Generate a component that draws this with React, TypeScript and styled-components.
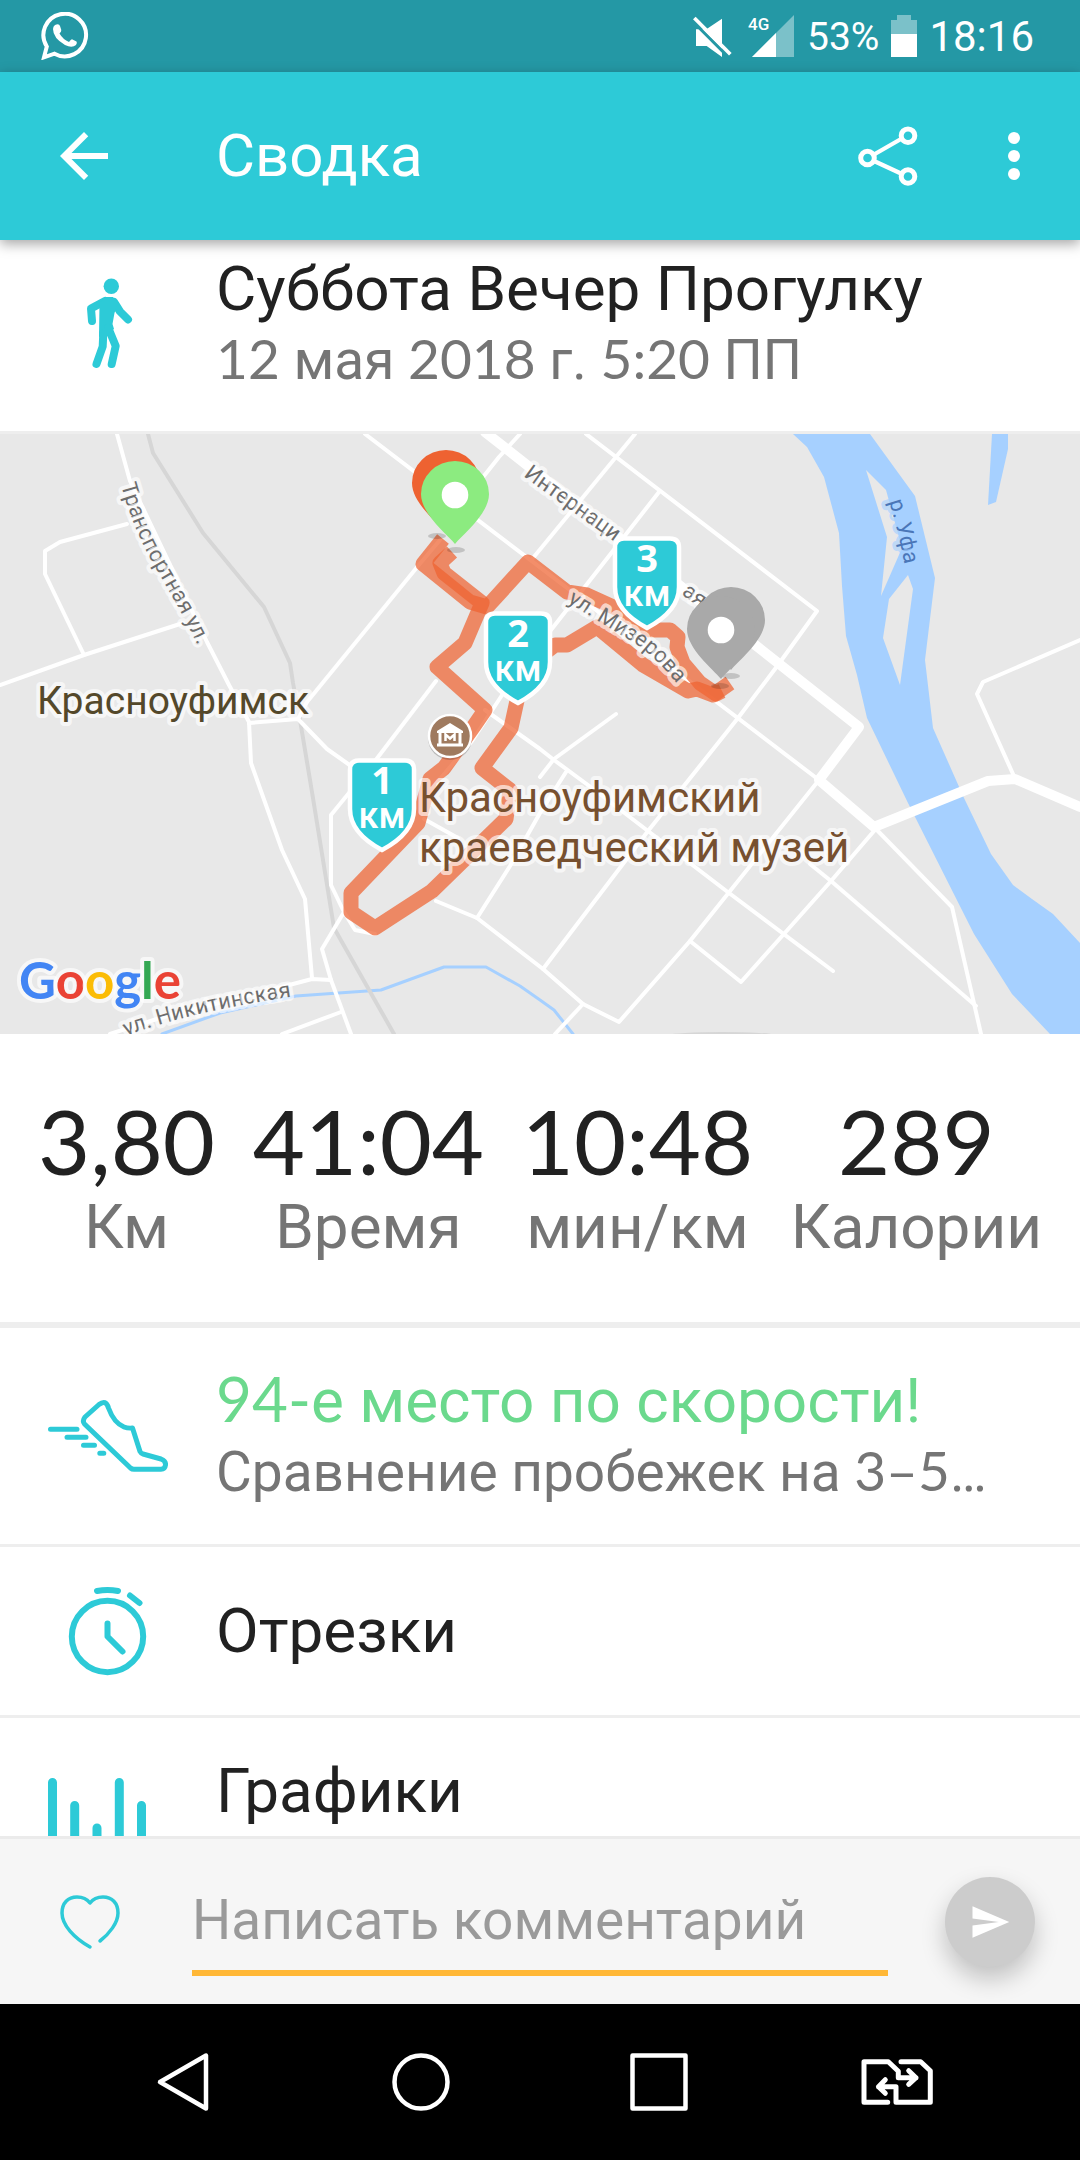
import React, { Fragment, ReactNode } from "react";
import styled, { createGlobalStyle } from "styled-components";

const color = {
  status: "#2498a5",
  brand: "#2dcad7",
  text: "#212121",
  muted: "#757575",
  divider: "#eeeeee",
  success: "#6bd98d",
  bar: "#f6f6f6",
  accent: "#ffb736",
  disabled: "#cccccc",
  route: "#ee6231",
  pinStart: "#8ceb80",
  pinEnd: "#a9a9a9",
  land: "#e8e8e8",
  water: "#a6d0ff",
  street: "#6d6d6d",
  town: "#54482a",
  museum: "#77502f",
};

const GlobalStyle = createGlobalStyle`
  *, *::before, *::after { box-sizing: border-box; }
  body {
    margin: 0;
    background: #ffffff;
    color: ${color.text};
    font-family: Roboto, "Noto Sans", sans-serif;
  }
  button {
    border: 0;
    padding: 0;
    background: none;
    color: inherit;
    font: inherit;
    cursor: pointer;
  }
  svg { display: block; }
`;

/* ---------- layout ---------- */

const Screen = styled.div`
  display: flex;
  flex-direction: column;
  height: 100vh;
`;

const StatusBar = styled.div`
  flex: none;
  display: flex;
  align-items: center;
  gap: 12px;
  height: 72px;
  padding: 0 46px 0 41px;
  background: ${color.status};
  color: #ffffff;
`;

const Spacer = styled.span`
  flex: 1;
`;

const StatusText = styled.span<{ $size: number }>`
  font-size: ${(p) => p.$size}px;
  line-height: 72px;
  padding-top: 2px;
`;

const AppBar = styled.header`
  flex: none;
  position: relative;
  z-index: 1;
  display: flex;
  align-items: center;
  height: 168px;
  padding: 0 30px 0 48px;
  background: ${color.brand};
  color: #ffffff;
  box-shadow: 0 4px 12px rgba(0, 0, 0, 0.35);
`;

const BarTitle = styled.h1`
  flex: 1;
  margin: 0;
  padding-left: 96px;
  font-size: 60px;
  font-weight: 400;
  line-height: 72px;
`;

const BarActions = styled.div`
  display: flex;
  gap: 54px;
`;

const Content = styled.main`
  flex: 1;
  min-height: 0;
  overflow-y: auto;
  scrollbar-width: none;
`;

const rowLayout = `
  display: grid;
  grid-template-columns: 120px minmax(0, 1fr);
  column-gap: 48px;
  align-items: center;
  width: 100%;
  text-align: left;
`;

const Summary = styled.section`
  ${rowLayout}
  padding: 14px 48px 35px;
  border-bottom: 3px solid ${color.divider};
`;

const RowButton = styled.button<{ $tall?: boolean }>`
  ${rowLayout}
  padding: ${(p) => (p.$tall ? "38px 48px 36px" : "24px 48px")};
  border-bottom: 3px solid ${color.divider};
`;

const RowText = styled.span<{ $top?: boolean }>`
  display: block;
  align-self: ${(p) => (p.$top ? "start" : "center")};
`;

const Title = styled.span<{ $success?: boolean }>`
  display: block;
  color: ${(p) => (p.$success ? color.success : color.text)};
  font-size: 62px;
  line-height: 70px;
  white-space: nowrap;
`;

const Subtitle = styled.span`
  display: block;
  overflow: hidden;
  color: ${color.muted};
  font-size: 55px;
  line-height: 72px;
  text-overflow: ellipsis;
  white-space: nowrap;
`;

const Digits = styled.span`
  font-family: Lato, Roboto, sans-serif;
  line-height: 1;
`;

const Stats = styled.dl`
  display: flex;
  justify-content: space-between;
  margin: 0;
  padding: 58px 38px 56px;
  border-bottom: 6px solid ${color.divider};
`;

const Stat = styled.div`
  display: flex;
  flex-direction: column-reverse;
  align-items: center;
`;

const StatLabel = styled.dt`
  color: ${color.muted};
  font-size: 62px;
  line-height: 78px;
`;

const StatValue = styled.dd`
  margin: 0;
  font-family: Lato, Roboto, sans-serif;
  font-size: 90px;
  line-height: 96px;
`;

const CommentBar = styled.form`
  flex: none;
  display: flex;
  align-items: center;
  height: 168px;
  padding: 0 45px 0 60px;
  border-top: 3px solid #ebebeb;
  background: ${color.bar};
`;

const CommentInput = styled.input`
  flex: 1;
  min-width: 0;
  align-self: flex-end;
  height: 107px;
  margin: 0 57px 28px 72px;
  padding: 0;
  border: 0;
  border-bottom: 6px solid ${color.accent};
  border-radius: 0;
  outline: none;
  background: none;
  color: ${color.text};
  font-family: Roboto, "Noto Sans", sans-serif;
  font-size: 55px;
  &::placeholder {
    color: #9a9a9a;
    opacity: 1;
  }
`;

const SendButton = styled.button`
  display: grid;
  place-items: center;
  width: 90px;
  height: 90px;
  border-radius: 50%;
  background: ${color.disabled};
  box-shadow: 0 12px 24px rgba(0, 0, 0, 0.22);
`;

const NavBar = styled.nav`
  flex: none;
  display: flex;
  height: 156px;
  padding: 0 64px;
  background: #000000;
  color: #ffffff;
`;

const NavButton = styled.button`
  flex: 1;
  display: grid;
  place-items: center;
`;

/* ---------- map ---------- */

const MapFigure = styled.figure`
  margin: 0;
  background: ${color.land};
  svg { width: 100%; height: auto; }
`;

const Road = styled.path<{ $width?: number }>`
  fill: none;
  stroke: #ffffff;
  stroke-width: ${(p) => p.$width ?? 4};
  stroke-linejoin: round;
  stroke-linecap: round;
`;

const Rail = styled(Road)`
  stroke: #d6d6d6;
`;

const Stream = styled(Road)`
  stroke: ${color.water};
`;

const Route = styled.path`
  fill: none;
  stroke: ${color.route};
  stroke-opacity: 0.72;
  stroke-width: 15;
  stroke-linejoin: round;
`;

const MapLabel = styled.text<{ $size: number; $fill: string; $halo?: string }>`
  fill: ${(p) => p.$fill};
  font-family: Roboto, "Noto Sans", sans-serif;
  font-size: ${(p) => p.$size}px;
  paint-order: stroke;
  stroke: ${(p) => p.$halo ?? "rgba(255, 255, 255, 0.65)"};
  stroke-width: 8px;
  stroke-linejoin: round;
`;

const LogoText = styled(MapLabel)`
  font-family: Lato, sans-serif;
  font-weight: 700;
`;

const ShieldNumber = styled.text`
  fill: #ffffff;
  font-family: "Open Sans", sans-serif;
  font-size: 38px;
  font-weight: 700;
  text-anchor: middle;
`;

const ShieldUnit = styled.text`
  fill: #ffffff;
  font-family: Roboto, sans-serif;
  font-size: 36px;
  font-weight: 500;
  text-anchor: middle;
`;

const Pin = ({ x, y, fill, dot }: { x: number; y: number; fill: string; dot?: boolean }) => (
  <g transform={`translate(${x} ${y})`}>
    <path d="M0 0C-8-10-34-30-34-50A34 33 0 0 1 34-50C34-30 8-10 0 0Z" fill={fill} />
    {dot && <circle cy="-49" r="13.3" fill="#ffffff" />}
  </g>
);

const Shield = ({ x, y, value }: { x: number; y: number; value: number }) => (
  <g transform={`translate(${x} ${y})`}>
    <path
      d="M-23-92.500H23Q32-92.500 32-83.500V-44Q32-20 0-3Q-32-20-32-44V-83.500Q-32-92.500-23-92.500Z"
      fill={color.brand}
      stroke="#ffffff"
      strokeWidth="4.500"
    />
    <ShieldNumber y="-59">{value}</ShieldNumber>
    <ShieldUnit y="-25">км</ShieldUnit>
  </g>
);

const roads = [
  "M117 0L130 47L207 208L229 251L249 288L251 329L282 416L305 465L312 544",
  "M127 90L60 108L45 117V140L84 221",
  "M0 251L84 221L183 189",
  "M249 289L298 285L327 315L351 332",
  "M298 285L307 268L418 132L440 106",
  "M365 0L819 346",
  "M586 0L817 177L778 231L738 284L648 397L543 535L583 570L619 588L690 507L819 346",
  "M436 467L477 484L543 535",
  "M477 484L510 432L540 379L566 338",
  "M540 343L554 325L616 280",
  "M485 276L540 315L554 326L592 354L648 397L729 459L833 537",
  "M690 507L741 548L783 501L831 447L874 397",
  "M810 430L831 447L976 572",
  "M874 393L952 473L981 600",
  "M635 0L616 23L533 124",
  "M659 58L609 122L540 210L506 255L472 307L440 345",
  "M520 0L499 23L480 47",
  "M436 247L375 327L331 381V451L344 478L322 515L331 546L351 600",
  "M344 478L355 496L375 500",
  "M110 600L160 584L293 550L312 545L331 546",
  "M341 578L282 600",
  "M424 385L458 404",
  "M583 570L555 600",
  "M1080 206L983 248L977 260L1013 340",
];

const RouteMap = () => (
  <MapFigure>
    <svg viewBox="0 0 1080 600" role="img" aria-label="Карта маршрута">
      <defs>
        <path id="transport" d="M121 51Q134 98 158 138T206 228" />
        <path id="inter" d="M523 42L640 126" />
        <path id="inter-end" d="M681 160L720 188" />
        <path id="mizerova" d="M567 168L636 210Q658 224 690 266" />
        <path id="nikitin" d="M126 602Q200 574 320 559" />
        <path id="ufa" d="M889 68Q900 100 910 160" />
      </defs>
      <path
        fill={color.water}
        fillRule="evenodd"
        d="M793 0L807 13L824 43L839 99L842 152L846 202L857 241L867 284L908 369L974 500L1012 560L1050 600H1080V509L1053 480L1032 465L1013 451L991 420L964 364L933 294L925 226L935 144L915 62L870 0ZM866 36L886 56L902 114L881 162L887 103ZM908 141L913 155L900 251L883 204L889 165Z"
      />
      <path fill={color.water} d="M992 0H1008V15L996 68L988 71Z" />
      <Stream d="M162 600L220 579L296 562L381 556L444 533H486L520 552L540 566L554 576L573 600" $width={3} />
      <ellipse cx="722" cy="601" rx="52" ry="3" fill="#d6d6d6" />
      <Rail d="M148 0L153 19L203 99L264 173L290 229L293 249L300 286L312 358L334 494L394 600" />
      {roads.map((d) => (
        <Road key={d} d={d} />
      ))}
      <Road d="M485-2L754 210L859 293L819 346L874 393L988 347L1015 345L1080 373" $width={10} />

      <Route d="M452 118L440 129L444 139L482 169L465 209L437 233L485 276L474 292L444 334L430 345L418 389L351 459V478L375 494L432 457L506 385L510 356L482 334L511 294L518 262L530 230L555 211H567L597 193L643 231L688 257L697 255L713 261L730 249" />
      <Route d="M722 257L716 260L700 249L683 229L677 213L678 203L670 196H650L620 176L587 161L567 158L528 128L487 173L470 168L423 130L443 105" />

      <MapLabel $size={39} $fill={color.town} x="37" y="280">Красноуфимск</MapLabel>
      <MapLabel $size={42} $fill={color.museum} x="419" y="378">Красноуфимский</MapLabel>
      <MapLabel $size={42} $fill={color.museum} x="419" y="428">краеведческий музей</MapLabel>
      <MapLabel $size={22} $fill={color.street}><textPath href="#transport">Транспортная ул.</textPath></MapLabel>
      <MapLabel $size={22} $fill={color.street}><textPath href="#inter">Интернаци</textPath></MapLabel>
      <MapLabel $size={22} $fill={color.street}><textPath href="#inter-end">ая</textPath></MapLabel>
      <MapLabel $size={22} $fill={color.street}><textPath href="#mizerova">ул. Мизерова</textPath></MapLabel>
      <MapLabel $size={22} $fill={color.street}><textPath href="#nikitin">ул. Никитинская</textPath></MapLabel>
      <MapLabel $size={22} $fill="#4a76b8" $halo="rgba(166, 208, 255, 0.65)"><textPath href="#ufa">р. Уфа</textPath></MapLabel>

      <g transform="translate(450 302)">
        <circle cy="2" r="22" fill="rgba(0, 0, 0, 0.2)" />
        <circle r="21" fill="#9f7a5f" stroke="#ffffff" strokeWidth="2.500" />
        <path d="M-13-5L0-13L13-5V-3H-13Z" fill="#ffffff" />
        <path d="M-10-3V8M10-3V8M-13 9H13" stroke="#ffffff" strokeWidth="3" />
        <path d="M-4.500 5V-1.500L0 2.500L4.500-1.500V5" fill="none" stroke="#ffffff" strokeWidth="2.500" />
      </g>

      <g fill="rgba(0, 0, 0, 0.16)">
        <ellipse cx="437" cy="102" rx="9" ry="3" />
        <ellipse cx="456" cy="116" rx="9" ry="3" />
        <ellipse cx="731" cy="242" rx="9" ry="3" />
        <ellipse cx="720" cy="252" rx="9" ry="3" />
      </g>
      <Pin x={446} y={99} fill={color.route} />
      <Pin x={455} y={110} fill={color.pinStart} dot />
      <Shield x={647} y={197} value={3} />
      <Shield x={518} y={272} value={2} />
      <Shield x={382} y={419} value={1} />
      <Pin x={731} y={236} fill={color.pinEnd} />
      <Pin x={721} y={245} fill={color.pinEnd} dot />

      <LogoText $size={51} $fill="#4285f4" x="19" y="565">
        G<tspan fill="#ea4335">o</tspan>
        <tspan fill="#fbbc05">o</tspan>
        <tspan fill="#4285f4">g</tspan>
        <tspan fill="#34a853">l</tspan>
        <tspan fill="#ea4335">e</tspan>
      </LogoText>
    </svg>
  </MapFigure>
);

/* ---------- icons ---------- */

const LineIcon = ({ w, h, stroke, children }: { w: number; h: number; stroke: number; children: ReactNode }) => (
  <svg
    width={w}
    height={h}
    viewBox={`0 0 ${w} ${h}`}
    fill="none"
    stroke="currentColor"
    strokeWidth={stroke}
    strokeLinecap="round"
    strokeLinejoin="round"
    aria-hidden="true"
  >
    {children}
  </svg>
);

const BrandIcon = styled.span`
  display: block;
  color: ${color.brand};
`;

const WhatsAppIcon = () => (
  <svg width="48" height="48" viewBox="0 0 48 48" aria-hidden="true">
    <path d="M13.500 41.700A21.300 21.300 0 1 0 5.800 34.500L3 45.300Z" fill="none" stroke="#fff" strokeWidth="4" />
    <path d="M14 13Q18 11 19 14L20.300 18Q20.500 19.500 18.500 21.500Q22 27.500 28 30Q30 27.200 31 27.300L35.500 29.500Q36.500 30.500 35 33Q31 36.500 24 33Q12 26 12 17Q12 14.500 14 13Z" fill="#fff" />
  </svg>
);

const MuteIcon = () => (
  <svg width="44" height="44" viewBox="0 0 132 132" aria-hidden="true">
    <path d="M15 46H46L93 14V129L47 96H15Z" fill="#fff" />
    <path d="M4 21L111 128" stroke={color.status} strokeWidth="9" />
    <path d="M10 12L118 121" stroke="#fff" strokeWidth="11" />
  </svg>
);

const NetworkType = styled.text`
  fill: #ffffff;
  font-family: Roboto, sans-serif;
  font-size: 17px;
  font-weight: 500;
`;

const SignalIcon = () => (
  <svg width="48" height="44" viewBox="0 0 48 44" aria-hidden="true">
    <path d="M5 43L47 1V43Z" fill="#fff" fillOpacity="0.400" />
    <path d="M5 43L29 19V43Z" fill="#fff" />
    <NetworkType x="1" y="16">4G</NetworkType>
  </svg>
);

const BatteryIcon = () => (
  <svg width="26" height="42" viewBox="0 0 26 42" aria-hidden="true">
    <path d="M6 0H20V5H26V19H0V5H6Z" fill="#fff" fillOpacity="0.400" />
    <path d="M0 19H26V42H0Z" fill="#fff" />
  </svg>
);

const BackIcon = () => (
  <svg width="72" height="72" viewBox="0 0 24 24" fill="currentColor" aria-hidden="true">
    <path d="M20 11H7.830l5.590-5.590L12 4l-8 8 8 8 1.410-1.410L7.830 13H20v-2z" />
  </svg>
);

const ShareIcon = () => (
  <LineIcon w={72} h={72} stroke={5}>
    <circle cx="15.500" cy="38" r="6.800" />
    <circle cx="56" cy="15.700" r="6.800" />
    <circle cx="56" cy="56.500" r="6.800" />
    <path d="M22 34.500L49 19M22 41L49 53.500" strokeWidth="4.300" />
  </LineIcon>
);

const MoreIcon = () => (
  <svg width="72" height="72" viewBox="0 0 72 72" fill="currentColor" aria-hidden="true">
    <circle cx="36" cy="18" r="6" />
    <circle cx="36" cy="36" r="6" />
    <circle cx="36" cy="54" r="6" />
  </svg>
);

const WalkIcon = () => (
  <LineIcon w={120} h={120} stroke={8}>
    <circle cx="63.300" cy="21.300" r="7.700" fill="currentColor" stroke="none" />
    <path d="M44 56L43 43.500L57 36M66 37L72 46.500L80 54.500" />
    <path d="M51.500 38L57 32H65L70 38L66.500 48L64.500 59L66 64L59 69L51 72Z" fill="currentColor" stroke="none" />
    <path d="M55.300 68L54.700 81.500L48.500 99M60.300 63L67.700 81L63.700 99" />
  </LineIcon>
);

const ShoeIcon = () => (
  <LineIcon w={120} h={120} stroke={5}>
    <path d="M36.500 47Q34 44 37 40L51 27.500Q58 22 60.500 31Q66 46 76 50Q80 51.500 84.500 51L92 74.500Q93 76.500 95 77L113 82Q118 84 117.500 88Q117 92.300 113 92.300H86Q84 92.300 82.500 91Z" />
    <path d="M2.500 52.300H29M19 60.300H38M35.500 68.300H46.500M51.800 76.300H55.800" />
  </LineIcon>
);

const TimerIcon = () => (
  <LineIcon w={120} h={120} stroke={6}>
    <circle cx="59.500" cy="65.500" r="35.700" />
    <path d="M59.500 52.500V65.500L74.500 80.500M49 20Q59.500 18 70 20M82 24.500L91.500 32" />
  </LineIcon>
);

const ChartIcon = () => (
  <LineIcon w={120} h={120} stroke={9}>
    <path d="M4.500 26.500V110M26.700 49.500V110M49 72V110M71.300 26.500V110M93.500 49.500V110" />
  </LineIcon>
);

const HeartIcon = () => (
  <LineIcon w={60} h={60} stroke={3.5}>
    <path d="M30 55C14 46 2 33 2 21C2 11 8 5 17 5C22 5 27 7 30 11C33 7 38 5 43 5C52 5 58 11 58 21C58 31 49 42 40 49" />
  </LineIcon>
);

const SendIcon = () => (
  <svg width="42" height="42" viewBox="0 0 24 24" fill="#fff" aria-hidden="true">
    <path d="M2 21L23 12L2 3V10L17 12L2 14Z" />
  </svg>
);

/* ---------- data ---------- */

const stats = [
  { value: "3,80", label: "Км" },
  { value: "41:04", label: "Время" },
  { value: "10:48", label: "мин/км" },
  { value: "289", label: "Калории" },
];

/* Numbers, with the dashes and colons inside them, are set in the numeric face. */
const withDigits = (text: string) =>
  text.split(/(\d[\d:–-]*)/).map((part, i) =>
    /^\d/.test(part) ? <Digits key={i}>{part}</Digits> : <Fragment key={i}>{part}</Fragment>
  );

const App = () => (
  <>
    <GlobalStyle />
    <Screen>
      <StatusBar>
        <WhatsAppIcon />
        <Spacer />
        <MuteIcon />
        <SignalIcon />
        <StatusText $size={39}>53%</StatusText>
        <BatteryIcon />
        <StatusText $size={42}>18:16</StatusText>
      </StatusBar>

      <AppBar>
        <button type="button" aria-label="Назад"><BackIcon /></button>
        <BarTitle>Сводка</BarTitle>
        <BarActions>
          <button type="button" aria-label="Поделиться"><ShareIcon /></button>
          <button type="button" aria-label="Ещё"><MoreIcon /></button>
        </BarActions>
      </AppBar>

      <Content>
        <Summary>
          <BrandIcon><WalkIcon /></BrandIcon>
          <RowText>
            <Title>Суббота Вечер Прогулку</Title>
            <Subtitle>{withDigits("12 мая 2018 г. 5:20 ПП")}</Subtitle>
          </RowText>
        </Summary>

        <RouteMap />

        <Stats>
          {stats.map((s) => (
            <Stat key={s.label}>
              <StatLabel>{s.label}</StatLabel>
              <StatValue>{s.value}</StatValue>
            </Stat>
          ))}
        </Stats>

        <RowButton type="button" $tall>
          <BrandIcon><ShoeIcon /></BrandIcon>
          <RowText>
            <Title $success>{withDigits("94-е место по скорости!")}</Title>
            <Subtitle>{withDigits("Сравнение пробежек на 3–5…")}</Subtitle>
          </RowText>
        </RowButton>

        <RowButton type="button">
          <BrandIcon><TimerIcon /></BrandIcon>
          <RowText>
            <Title>Отрезки</Title>
          </RowText>
        </RowButton>

        <RowButton type="button" $tall>
          <BrandIcon><ChartIcon /></BrandIcon>
          <RowText $top>
            <Title>Графики</Title>
          </RowText>
        </RowButton>
      </Content>

      <CommentBar onSubmit={(e) => e.preventDefault()}>
        <button type="button" aria-label="Нравится">
          <BrandIcon><HeartIcon /></BrandIcon>
        </button>
        <CommentInput type="text" aria-label="Комментарий" placeholder="Написать комментарий" />
        <SendButton type="submit" aria-label="Отправить"><SendIcon /></SendButton>
      </CommentBar>

      <NavBar>
        <NavButton type="button" aria-label="Назад">
          <LineIcon w={60} h={60} stroke={4.5}><path d="M53 3.500V56.500L7 30Z" /></LineIcon>
        </NavButton>
        <NavButton type="button" aria-label="Домой">
          <LineIcon w={60} h={60} stroke={4.5}><circle cx="30" cy="30" r="26.500" /></LineIcon>
        </NavButton>
        <NavButton type="button" aria-label="Недавние">
          <LineIcon w={60} h={60} stroke={4.5}><path d="M3.500 3.500H56.500V56.500H3.500Z" /></LineIcon>
        </NavButton>
        <NavButton type="button" aria-label="Сменить SIM">
          <LineIcon w={72} h={48} stroke={5}>
            <path d="M26.700 44.300H3V3.700H27.300L37.300 13.300V19.700H55M47.700 12.700L55 19.700L47.700 26.300" />
            <path d="M40 3.700H59.700L69.300 12.700V44.300H35V28.700H17.500M24.300 21.700L17.500 28.700L24.300 35.300" />
          </LineIcon>
        </NavButton>
      </NavBar>
    </Screen>
  </>
);

export default App;
